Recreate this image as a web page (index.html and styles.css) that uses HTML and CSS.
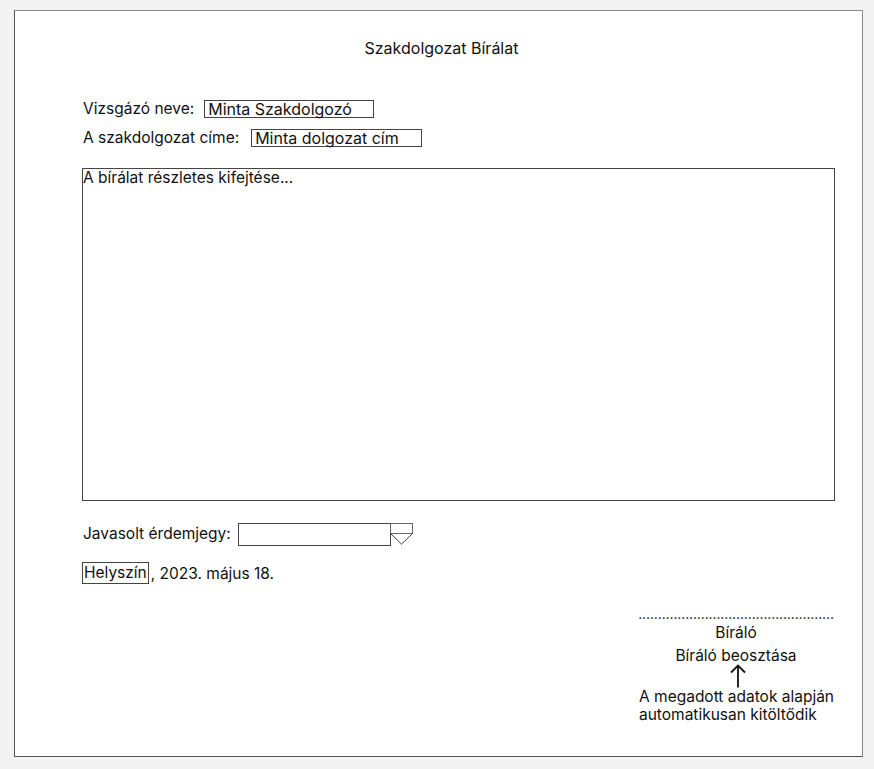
FILE: index.html
```html
<!DOCTYPE html>
<html lang="hu">
<head>
<meta charset="utf-8">
<title>Szakdolgozat Bírálat</title>
<link rel="stylesheet" href="styles.css">
</head>
<body>
<div class="frame">
  <div class="title">Szakdolgozat Bírálat</div>
  <div class="fields">
    <div class="row"><span class="label">Vizsgázó neve:</span><span class="input input-name">Minta Szakdolgozó</span></div>
    <div class="row"><span class="label label-title">A szakdolgozat címe:</span><span class="input input-title">Minta dolgozat cím</span></div>
  </div>
  <div class="textarea">A bírálat részletes kifejtése...</div>
  <div class="row grade-row">
    <span class="label">Javasolt érdemjegy:</span>
    <span class="select"></span>
    <span class="dropdown">
      <span class="dropdown-box"></span>
      <svg class="dropdown-tri" width="23" height="12" viewBox="0 0 23 12"><path d="M0.5 0.5 L11.5 11.2 L22.5 0.5" fill="none" stroke="#444" stroke-width="1"/></svg>
    </span>
  </div>
  <div class="row place-row"><span class="place">Helyszín</span><span class="date">, 2023. május 18.</span></div>
  <div class="signature">
    <div class="dots">..................................................</div>
    <div class="sig-line">Bíráló</div>
    <div class="sig-line">Bíráló beosztása</div>
    <svg class="arrow" width="18" height="24" viewBox="0 0 18 24"><path d="M9 23.5 V1.5 M2 8.5 L9 1.5 L16 8.5" fill="none" stroke="#111" stroke-width="1.8"/></svg>
    <div class="note">A megadott adatok alapján<br>automatikusan kitöltődik</div>
  </div>
</div>
</body>
</html>
```
FILE: styles.css
```css
html, body {
  margin: 0;
  padding: 0;
  background: #f3f3f3;
}
body {
  font-family: Inter, "Noto Sans", sans-serif;
  font-size: 15.5px;
  color: #111;
  padding: 10px 12px 0 14px;
}
.frame {
  box-sizing: border-box;
  width: 849px;
  height: 747px;
  background: #fff;
  border: 1px solid #555;
  border-top-color: #888;
  border-right-color: #888;
  padding: 27px 27px 0 67px;
  display: flex;
  flex-direction: column;
}
.title {
  text-align: center;
  font-size: 16px;
  line-height: 20px;
  padding-right: 34px;
}
.fields {
  margin-top: 42px;
  display: flex;
  flex-direction: column;
  gap: 11px;
}
.row {
  display: flex;
  align-items: center;
}
.label {
  padding-left: 1px;
  margin-right: 10px;
  line-height: 18px;
}
.label-title {
  margin-right: 12px;
}
.input {
  box-sizing: border-box;
  height: 18px;
  border: 1px solid #444;
  font-size: 16px;
  line-height: 16px;
  padding-left: 3px;
}
.input-name { width: 170px; }
.input-title { width: 171px; }
.textarea {
  box-sizing: border-box;
  margin-top: 21px;
  height: 333px;
  border: 1px solid #444;
  line-height: 18px;
  padding-top: 0;
}
.grade-row {
  margin-top: 22px;
  align-items: flex-start;
}
.grade-row .label {
  margin-top: 2px;
  margin-right: 7px;
}
.select {
  box-sizing: border-box;
  width: 153px;
  height: 23px;
  border: 1px solid #444;
}
.dropdown {
  display: flex;
  flex-direction: column;
  margin-left: -1px;
}
.dropdown-box {
  box-sizing: border-box;
  width: 23px;
  height: 11px;
  border: 1px solid #666;
}
.dropdown-tri {
  display: block;
  margin-top: -1px;
}
.place-row {
  margin-top: 16px;
}
.place {
  box-sizing: border-box;
  border: 1px solid #444;
  height: 22px;
  line-height: 20px;
  padding: 0 1px 0 1px;
}
.date {
  margin-left: 2px;
}
.signature {
  align-self: flex-end;
  margin-right: 2px;
  margin-top: 27px;
  width: 194px;
  display: flex;
  flex-direction: column;
  align-items: center;
}
.dots {
  font-size: 14px;
  line-height: 6px;
  height: 10px;
  letter-spacing: -0.12px;
  white-space: nowrap;
}
.sig-line {
  line-height: 23px;
}
.arrow {
  display: block;
  margin-left: 4px;
  margin-top: -3px;
}
.note {
  align-self: flex-start;
  line-height: 18px;
  margin-top: 0;
  white-space: nowrap;
}
```
